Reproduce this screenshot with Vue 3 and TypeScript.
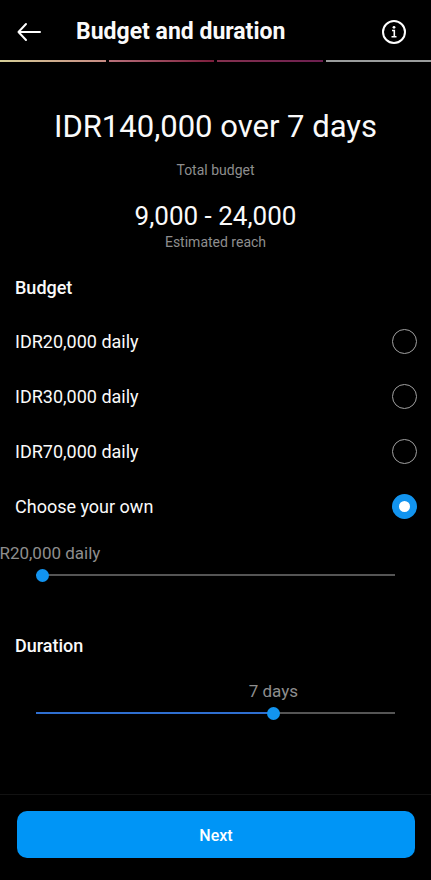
<script setup lang="ts">
import { computed, ref } from 'vue'

interface BudgetOption {
  id: string
  label: string
}

const options: BudgetOption[] = [
  { id: '20000', label: 'IDR20,000 daily' },
  { id: '30000', label: 'IDR30,000 daily' },
  { id: '70000', label: 'IDR70,000 daily' },
  { id: 'custom', label: 'Choose your own' },
]

const selected = ref('custom')
const daily = ref(20000)
const days = ref(7)

const DAILY_MIN = 20000
const DAILY_MAX = 500000
const DAYS_MIN = 1
const DAYS_MAX = 10

const money = (value: number): string => 'IDR' + value.toLocaleString('en-US')

const dailyRate = computed(() =>
  selected.value === 'custom' ? daily.value : Number(selected.value),
)
const total = computed(() => money(dailyRate.value * days.value))
const dailyPercent = computed(() => ((daily.value - DAILY_MIN) / (DAILY_MAX - DAILY_MIN)) * 100 + '%')
const daysPercent = computed(() => ((days.value - DAYS_MIN) / (DAYS_MAX - DAYS_MIN)) * 100 + '%')
</script>

<template>
  <div class="screen">
    <header class="bar">
      <button class="icon-button" type="button" aria-label="Back">
        <svg width="26" height="20" viewBox="0 0 26 20" fill="none" stroke="#fff" stroke-width="2" stroke-linecap="round" stroke-linejoin="round">
          <path d="M24 10H2.500M10 2L2.500 10l7.500 8" />
        </svg>
      </button>
      <h1 class="title">Budget and duration</h1>
      <button class="icon-button" type="button" aria-label="Information">
        <svg width="26" height="26" viewBox="0 0 26 26" fill="none" stroke="#fff">
          <circle cx="13" cy="13" r="11" stroke-width="2" />
          <path d="M11 11.500h2.300v6M10.500 17.800h5" stroke-width="1.600" />
          <circle cx="13" cy="8.300" r="1.400" fill="#fff" stroke="none" />
        </svg>
      </button>
    </header>
    <div class="steps">
      <span class="step first"></span>
      <span class="step second"></span>
      <span class="step third"></span>
      <span class="step"></span>
    </div>

    <main class="content">
      <section class="summary">
        <p class="total">{{ total }} over {{ days }} days</p>
        <p class="caption">Total budget</p>
        <p class="reach">9,000 - 24,000</p>
        <p class="caption">Estimated reach</p>
      </section>

      <fieldset class="group">
        <legend class="heading">Budget</legend>
        <label v-for="option in options" :key="option.id" class="option">
          <span>{{ option.label }}</span>
          <input v-model="selected" class="radio" type="radio" name="budget" :value="option.id" />
        </label>
      </fieldset>

      <div class="slider">
        <div class="rail">
          <label class="value" for="daily" :style="{ left: dailyPercent }">{{ money(daily) }} daily</label>
        </div>
        <input
          id="daily"
          v-model.number="daily"
          class="range"
          type="range"
          :min="DAILY_MIN"
          :max="DAILY_MAX"
          step="10000"
          :style="{ '--fill': dailyPercent }"
        />
      </div>

      <h2 class="heading duration">Duration</h2>
      <div class="slider">
        <div class="rail">
          <label class="value" for="days" :style="{ left: daysPercent }">{{ days }} days</label>
        </div>
        <input
          id="days"
          v-model.number="days"
          class="range"
          type="range"
          :min="DAYS_MIN"
          :max="DAYS_MAX"
          :style="{ '--fill': daysPercent }"
        />
      </div>
    </main>

    <footer class="footer">
      <button class="next" type="button">Next</button>
    </footer>
  </div>
</template>

<style>
body {
  margin: 0;
  background: #000;
}
</style>

<style scoped>
.screen {
  box-sizing: border-box;
  min-height: 100vh;
  display: flex;
  flex-direction: column;
  overflow: hidden;
  background: #000;
  color: #fafafa;
  font-family: Roboto, 'Liberation Sans', sans-serif;
}

.bar {
  display: flex;
  align-items: center;
  height: 60px;
  padding: 4px 24px 0 16px;
  box-sizing: border-box;
}

.icon-button {
  display: flex;
  padding: 0;
  border: 0;
  background: none;
  cursor: pointer;
}

.title {
  flex: 1;
  margin: 0 0 0 34px;
  font-size: 23px;
  line-height: 32px;
  font-weight: 700;
}

.steps {
  display: grid;
  grid-template-columns: repeat(4, 1fr);
  gap: 3px;
}

.step {
  height: 2px;
  background: #9a9c9c;
}

.first {
  background: linear-gradient(90deg, #d6cf98, #c78a83);
}

.second {
  background: linear-gradient(90deg, #b8707a, #7c1d3c);
}

.third {
  background: linear-gradient(90deg, #85314f, #6d1f50);
}

.content {
  flex: 1;
}

.summary {
  padding: 45px 16px 0;
  text-align: center;
}

.summary p {
  margin: 0;
}

.total {
  font-size: 31px;
  line-height: 40px;
}

.caption {
  font-size: 14px;
  line-height: 20px;
  color: #8e8e8e;
}

.total + .caption {
  padding: 13px 0 20px;
}

.reach {
  font-size: 26px;
  line-height: 32px;
}

.group {
  margin: 0;
  padding: 0;
  border: 0;
  min-width: 0;
}

.heading {
  margin: 0;
  padding: 24px 15px 14px;
  font-size: 18px;
  line-height: 24px;
  font-weight: 500;
}

.option {
  display: flex;
  align-items: center;
  justify-content: space-between;
  height: 55px;
  padding: 0 14px 0 15px;
  font-size: 18px;
  line-height: 24px;
  cursor: pointer;
}

.radio {
  appearance: none;
  box-sizing: border-box;
  width: 25px;
  height: 25px;
  margin: 0;
  border: 1px solid #a0a0a0;
  border-radius: 50%;
  background: #000;
}

.radio:checked {
  border: 7px solid #1294ef;
  background: #fff;
}

.slider {
  padding: 7px 36px 0;
}

.rail {
  position: relative;
  height: 24px;
  margin: 0 6px;
}

.value {
  position: absolute;
  top: 0;
  transform: translateX(-50%);
  font-size: 17px;
  line-height: 24px;
  color: #8e8e8e;
  white-space: nowrap;
}

.range {
  appearance: none;
  display: block;
  width: 100%;
  height: 20px;
  margin: 0;
  background: linear-gradient(90deg, #2f6fd0 var(--fill), #555 var(--fill)) center / 100% 2px no-repeat;
}

.range::-webkit-slider-thumb {
  appearance: none;
  width: 13px;
  height: 13px;
  border: 0;
  border-radius: 50%;
  background: #1294f0;
}

.duration {
  padding-top: 49px;
}

.footer {
  padding: 16px 16px 22px 17px;
  border-top: 1px solid #121212;
}

.next {
  display: block;
  width: 100%;
  height: 47px;
  padding: 2px 0 0;
  border: 0;
  border-radius: 10px;
  background: #0095f6;
  color: #fff;
  font: 500 16px/24px Roboto, 'Liberation Sans', sans-serif;
  cursor: pointer;
}
</style>
